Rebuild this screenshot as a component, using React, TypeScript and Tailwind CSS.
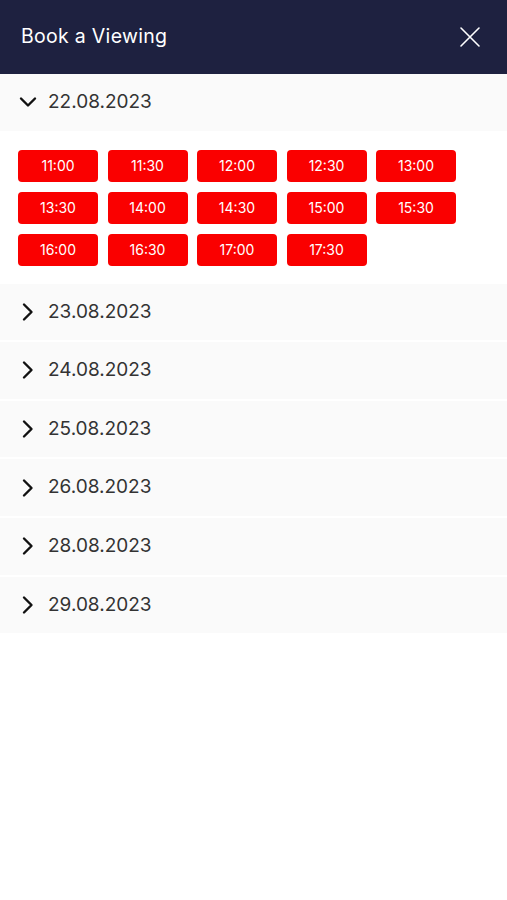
import { useState } from "react";

const times = [
  "11:00", "11:30", "12:00", "12:30", "13:00",
  "13:30", "14:00", "14:30", "15:00", "15:30",
  "16:00", "16:30", "17:00", "17:30",
];

const dates = ["22.08.2023", "23.08.2023", "24.08.2023", "25.08.2023", "26.08.2023", "28.08.2023", "29.08.2023"];

function Chevron({ open }: { open: boolean }) {
  return (
    <svg width="20" height="20" viewBox="0 0 20 20" fill="none" stroke="#111" strokeWidth="2.4" strokeLinecap="round" strokeLinejoin="round">
      {open ? <path d="M3 6.5l7 7 7-7" /> : <path d="M6 2.5l7.5 7.5L6 17.5" />}
    </svg>
  );
}

export default function App() {
  const [openDate, setOpenDate] = useState("22.08.2023");

  return (
    <div className="min-h-[900px] bg-white" style={{ fontFamily: "Inter, 'Open Sans', sans-serif" }}>
      <div className="h-[74px] bg-[#1e2140] flex items-center justify-between pl-[21px] pr-[26px]">
        <div className="text-white text-[19.5px] tracking-[0.3px]">Book a Viewing</div>
        <svg width="22" height="22" viewBox="0 0 22 22" stroke="#fff" strokeWidth="1.6" strokeLinecap="round">
          <path d="M2 2l18 18M20 2L2 20" />
        </svg>
      </div>
      <div className="flex flex-col gap-[2px]">
        {dates.map((d) => (
          <div key={d}>
            <button
              onClick={() => setOpenDate(openDate === d ? "" : d)}
              className="w-full h-[56.6px] bg-[#fafafa] flex items-center gap-[10px] pl-[18px] text-left"
            >
              <Chevron open={openDate === d} />
              <span className="text-[19px] text-[#333]">{d}</span>
            </button>
            {openDate === d && (
              <div className="bg-white pt-[19.5px] pb-[16px] pl-[18px] flex flex-wrap gap-x-[9.5px] gap-y-[10.5px] w-[470px]">
                {times.map((t) => (
                  <div key={t} className="w-[80px] h-[31.5px] rounded-[4px] bg-[#fa0000] text-white text-[14px] flex items-center justify-center">
                    {t}
                  </div>
                ))}
              </div>
            )}
          </div>
        ))}
      </div>
    </div>
  );
}
